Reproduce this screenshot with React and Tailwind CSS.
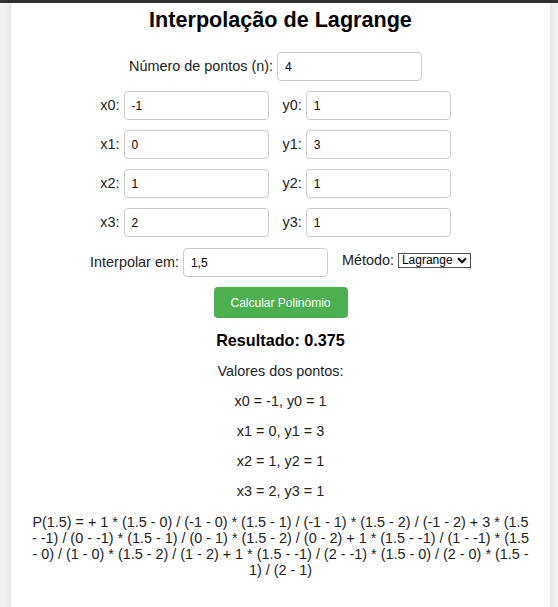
import { useState } from 'react';

const points = [
  { x: '-1', y: '1' },
  { x: '0', y: '3' },
  { x: '1', y: '1' },
  { x: '2', y: '1' },
];

const formula =
  'P(1.5) = + 1 * (1.5 - 0) / (-1 - 0) * (1.5 - 1) / (-1 - 1) * (1.5 - 2) / (-1 - 2) + 3 * (1.5 - -1) / (0 - -1) * (1.5 - 1) / (0 - 1) * (1.5 - 2) / (0 - 2) + 1 * (1.5 - -1) / (1 - -1) * (1.5 - 0) / (1 - 0) * (1.5 - 2) / (1 - 2) + 1 * (1.5 - -1) / (2 - -1) * (1.5 - 0) / (2 - 0) * (1.5 - 1) / (2 - 1)';

function Field({ label, value, first }) {
  return (
    <>
      <label className={first ? 'mr-[4px]' : 'ml-[4px] mr-[4px]'}>{label}</label>
      <input
        defaultValue={value}
        className="w-[145px] h-[29px] mr-[10px] px-[7px] border border-[#cccccc] rounded-[4px] bg-white text-[12px] text-black outline-none"
      />
    </>
  );
}

export default function App() {
  const [method, setMethod] = useState('lagrange');

  return (
    <div className="min-h-screen bg-[#f2f2f2] font-['Liberation_Sans',Arial,sans-serif] text-[14.4px] text-[#222]">
      <div className="h-[3px] bg-[#333333]" />
      <div className="ml-[11px] w-[539px] bg-white rounded-b-[8px] shadow-[0_0_10px_rgba(0,0,0,0.1)] px-[20px] pt-[4px] pb-[40px] text-center">
        <h2 className="text-[21.6px] font-bold leading-[25px] text-black">Interpolação de Lagrange</h2>

        <div className="mt-[20px] flex justify-center items-center">
          <Field label="Número de pontos (n):" value="4" first />
        </div>

        {points.map((p, i) => (
          <div key={i} className="mt-[10px] flex justify-center items-center">
            <Field label={`x${i}:`} value={p.x} first />
            <Field label={`y${i}:`} value={p.y} />
          </div>
        ))}

        <div className="mt-[11px] flex justify-center items-center">
          <Field label="Interpolar em:" value="1,5" first />
          <label className="ml-[4px] mr-[4px] mb-[4px]">Método:</label>
          <span className="relative inline-flex mb-[4px]">
            <select
              value={method}
              onChange={(e) => setMethod(e.target.value)}
              className="appearance-none h-[15px] pl-[3px] pr-[17px] border border-[#555555] bg-white text-[12px] leading-[13px] text-black outline-none rounded-none"
            >
              <option value="lagrange">Lagrange</option>
              <option value="newton">Newton</option>
            </select>
            <svg className="absolute right-[4px] top-[4px] pointer-events-none" width="10" height="7" viewBox="0 0 10 7">
              <path d="M1 1.3 L5 5.3 L9 1.3" fill="none" stroke="#111" strokeWidth="2.2" />
            </svg>
          </span>
        </div>

        <button className="mt-[10px] mx-auto block w-[134px] h-[31px] bg-[#4caf50] text-white text-[12px] rounded-[4px]">
          Calcular Polinômio
        </button>

        <h3 className="mt-[13px] text-[16.2px] font-bold leading-[19px] text-black">Resultado: 0.375</h3>

        <p className="mt-[12.6px] leading-[16px]">Valores dos pontos:</p>
        {points.map((p, i) => (
          <p key={i} className="mt-[14px] leading-[16px]">
            x{i} = {p.x}, y{i} = {p.y}
          </p>
        ))}

        <p className="mt-[15px] leading-[16px]">{formula}</p>
      </div>
    </div>
  );
}
